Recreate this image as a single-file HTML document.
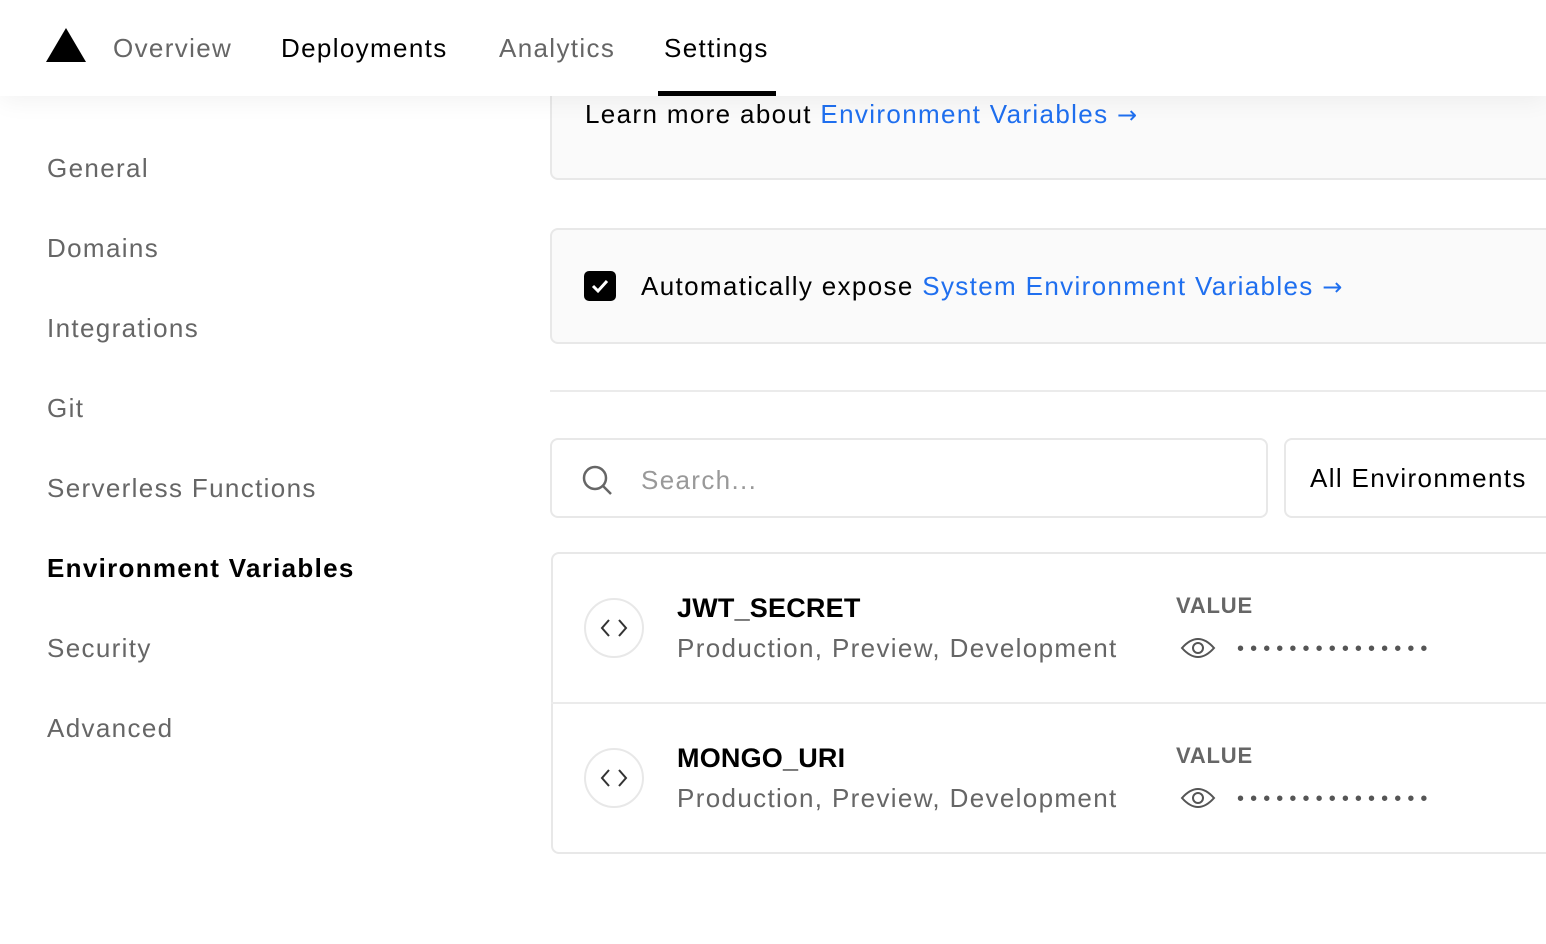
<!DOCTYPE html>
<html><head><meta charset="utf-8"><style>
*{margin:0;padding:0;box-sizing:border-box}
body{width:1546px;height:944px;overflow:hidden;background:#fff;font-family:"Liberation Sans",sans-serif;position:relative;color:#000;letter-spacing:1.35px}
.a{position:absolute;white-space:nowrap}
.hdr{position:absolute;left:0;top:0;width:1546px;height:96px;background:#fff;box-shadow:0 4px 24px rgba(0,0,0,0.06);z-index:5}
.nav{font-size:26px;top:33px}
.side{font-size:26px;color:#666;left:47px;top:0}
.card{position:absolute;background:#fafafa;border:2px solid #e8e8e8;border-radius:8px}
.blue{color:#1f6fef}
.ar{font-family:"DejaVu Sans",sans-serif;font-size:24px}
</style></head><body>
<div class="hdr">
<svg class="a" style="left:46px;top:28px" width="40" height="34" viewBox="0 0 40 34"><polygon points="20,0 40,34 0,34" fill="#000"/></svg>
<div class="a nav" style="left:113px;color:#666">Overview</div>
<div class="a nav" style="left:281px">Deployments</div>
<div class="a nav" style="left:499px;color:#666">Analytics</div>
<div class="a nav" style="left:664px">Settings</div>
<div class="a" style="left:658px;top:91px;width:118px;height:5px;background:#000"></div>
</div>
<div class="card" style="left:550px;top:60px;width:1010px;height:120px"></div>
<div class="a" style="left:585px;top:99px;font-size:26px">Learn more about <span class="blue">Environment Variables <span class="ar">→</span></span></div>
<div class="side a" style="top:153px">General</div>
<div class="side a" style="top:233px">Domains</div>
<div class="side a" style="top:313px">Integrations</div>
<div class="side a" style="top:393px">Git</div>
<div class="side a" style="top:473px">Serverless Functions</div>
<div class="side a" style="top:553px;color:#000;font-weight:bold;letter-spacing:1.3px">Environment Variables</div>
<div class="side a" style="top:633px">Security</div>
<div class="side a" style="top:713px">Advanced</div>

<div class="card" style="left:550px;top:228px;width:1010px;height:116px"></div>
<div class="a" style="left:584px;top:271px;width:32px;height:30px;background:#000;border-radius:5px"><svg width="32" height="30" viewBox="0 0 32 30"><path d="M9 15l5 5 9-10" stroke="#fff" stroke-width="3" fill="none"/></svg></div>
<div class="a" style="left:641px;top:271px;font-size:26px">Automatically expose <span class="blue">System Environment Variables <span class="ar">→</span></span></div>
<div class="a" style="left:550px;top:390px;width:1000px;height:2px;background:#ebebeb"></div>

<div class="a" style="left:550px;top:438px;width:718px;height:80px;border:2px solid #e8e8e8;border-radius:8px;background:#fff"></div>
<svg class="a" style="left:580px;top:463px" width="34" height="34" viewBox="0 0 34 34"><circle cx="15" cy="15" r="11" stroke="#666" stroke-width="2.5" fill="none"/><path d="M23 23l8 8" stroke="#666" stroke-width="2.5"/></svg>
<div class="a" style="left:641px;top:465px;font-size:26px;color:#999">Search...</div>
<div class="a" style="left:1284px;top:438px;width:300px;height:80px;border:2px solid #e8e8e8;border-radius:8px;background:#fff"></div>
<div class="a" style="left:1310px;top:463px;font-size:26px">All Environments</div>

<div class="a" style="left:551px;top:552px;width:1010px;height:302px;border:2px solid #e8e8e8;border-radius:8px;background:#fff"></div>
<div class="a" style="left:551px;top:702px;width:1000px;height:2px;background:#ebebeb"></div>

<div class="a" style="left:584px;top:598px;width:60px;height:60px;border:2px solid #e8e8e8;border-radius:50%"><svg width="56" height="56" viewBox="0 0 56 56"><path d="M23 20l-7 8 7 8M33 20l7 8-7 8" stroke="#333" stroke-width="2" fill="none"/></svg></div>
<div class="a" style="left:677px;top:593px;font-size:27px;font-weight:bold;letter-spacing:0.2px">JWT_SECRET</div>
<div class="a" style="left:677px;top:633px;font-size:26px;color:#666">Production, Preview, Development</div>
<div class="a" style="left:1176px;top:593px;font-size:22px;font-weight:bold;color:#666;letter-spacing:0.8px">VALUE</div>
<svg class="a" style="left:1180px;top:634px" width="36" height="28" viewBox="0 0 36 28"><path d="M2 14Q18 -4 34 14Q18 32 2 14Z" stroke="#555" stroke-width="2" fill="none"/><circle cx="18" cy="14" r="5" stroke="#555" stroke-width="2" fill="none"/></svg>
<div class="a" style="left:1237px;top:638px;font-size:20px;color:#555;letter-spacing:6.1px">•••••••••••••••</div>

<div class="a" style="left:584px;top:748px;width:60px;height:60px;border:2px solid #e8e8e8;border-radius:50%"><svg width="56" height="56" viewBox="0 0 56 56"><path d="M23 20l-7 8 7 8M33 20l7 8-7 8" stroke="#333" stroke-width="2" fill="none"/></svg></div>
<div class="a" style="left:677px;top:743px;font-size:27px;font-weight:bold;letter-spacing:0.2px">MONGO_URI</div>
<div class="a" style="left:677px;top:783px;font-size:26px;color:#666">Production, Preview, Development</div>
<div class="a" style="left:1176px;top:743px;font-size:22px;font-weight:bold;color:#666;letter-spacing:0.8px">VALUE</div>
<svg class="a" style="left:1180px;top:784px" width="36" height="28" viewBox="0 0 36 28"><path d="M2 14Q18 -4 34 14Q18 32 2 14Z" stroke="#555" stroke-width="2" fill="none"/><circle cx="18" cy="14" r="5" stroke="#555" stroke-width="2" fill="none"/></svg>
<div class="a" style="left:1237px;top:788px;font-size:20px;color:#555;letter-spacing:6.1px">•••••••••••••••</div>
</body></html>
